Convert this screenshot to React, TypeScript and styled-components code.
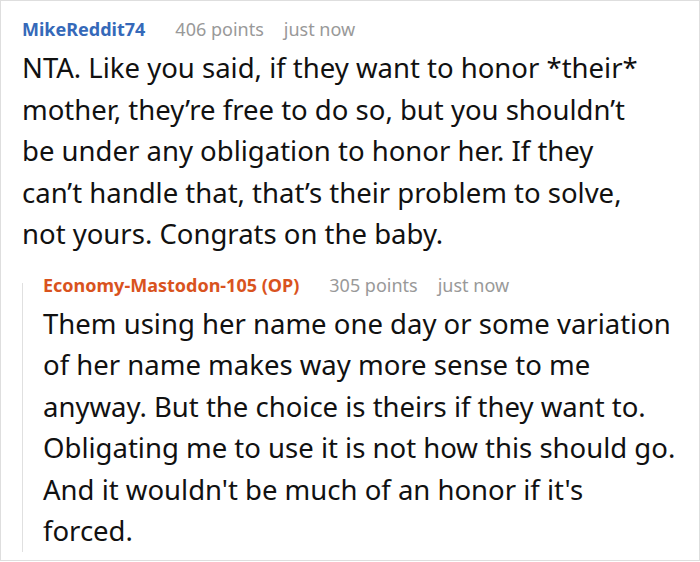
import React from "react";
import styled, { createGlobalStyle } from "styled-components";

const Global = createGlobalStyle`
  html, body { margin: 0; padding: 0; background: #fff; }
  body { font-family: "Noto Sans", "Open Sans", sans-serif; }
`;

const Card = styled.div`
  box-sizing: border-box;
  width: 700px;
  height: 561px;
  border: 1px solid #dedede;
  padding: 16px 10px 0 21px;
`;

const Comment = styled.div`
  display: flex;
  flex-direction: column;
  gap: 6px;
`;

const Reply = styled(Comment)`
  position: relative;
  margin-top: 18px;
  padding-left: 21px;
  &::before {
    content: "";
    position: absolute;
    left: 0;
    top: 10px;
    bottom: 0;
    width: 1px;
    background: #e0e0e0;
  }
`;

const Meta = styled.div`
  display: flex;
  align-items: baseline;
  gap: 20px;
  font-size: 18px;
  line-height: 24px;
  white-space: nowrap;
`;

const User = styled.span<{ $op?: boolean }>`
  font-weight: 700;
  margin-right: 10px;
  color: ${(p) => (p.$op ? "#d9531e" : "#3569b9")};
`;

const Info = styled.span`
  color: #999;
`;

const Body = styled.p`
  margin: 0;
  font-size: 27.5px;
  line-height: 41.5px;
  color: #111;
`;

const Line = styled.span`
  display: block;
  white-space: nowrap;
`;

const first = [
  "NTA. Like you said, if they want to honor *their*",
  "mother, they’re free to do so, but you shouldn’t",
  "be under any obligation to honor her. If they",
  "can’t handle that, that’s their problem to solve,",
  "not yours. Congrats on the baby.",
];

const second = [
  "Them using her name one day or some variation",
  "of her name makes way more sense to me",
  "anyway. But the choice is theirs if they want to.",
  "Obligating me to use it is not how this should go.",
  "And it wouldn't be much of an honor if it's",
  "forced.",
];

export default function App() {
  return (
    <>
      <Global />
      <Card>
        <Comment>
          <Meta>
            <User>MikeReddit74</User>
            <Info>406 points</Info>
            <Info>just now</Info>
          </Meta>
          <Body>
            {first.map((l) => (
              <Line key={l}>{l}</Line>
            ))}
          </Body>
        </Comment>
        <Reply>
          <Meta>
            <User $op>Economy-Mastodon-105 (OP)</User>
            <Info>305 points</Info>
            <Info>just now</Info>
          </Meta>
          <Body>
            {second.map((l) => (
              <Line key={l}>{l}</Line>
            ))}
          </Body>
        </Reply>
      </Card>
    </>
  );
}
